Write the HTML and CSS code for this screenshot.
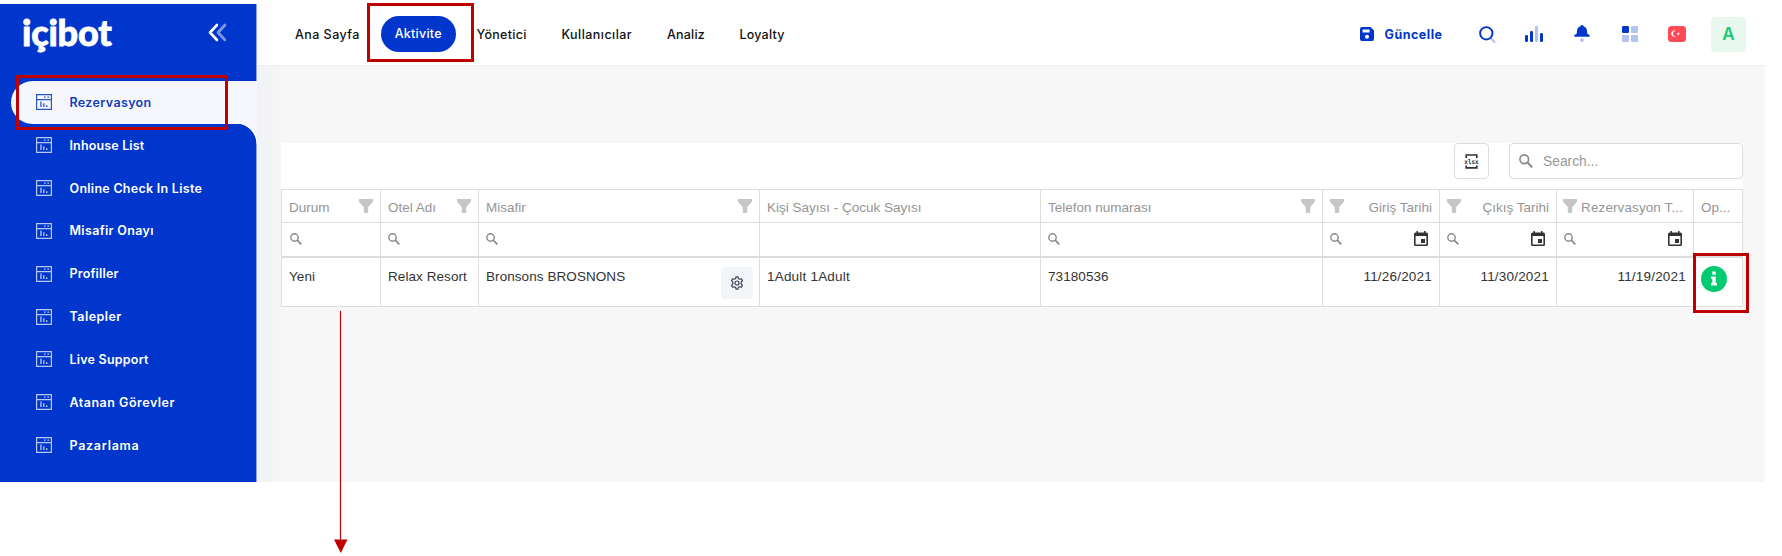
FILE: index.html
```
<!DOCTYPE html>
<html lang="tr">
<head>
<meta charset="utf-8">
<title>içibot</title>
<link rel="stylesheet" href="styles.css">
</head>
<body>
<svg class="defs" width="0" height="0">
  <symbol id="report" viewBox="0 0 16 16"><path d="M.6.6h14.8v14.8H.6zM.6 5.6h14.8" fill="none" stroke="currentColor" stroke-width="1.2"/><path d="M8 2.6h1.6v1.2H8zM11.4 2.6H13v1.2h-1.6zM4.3 7.6h1.3v5.4H4.3zM7.2 9.2h1.3V13H7.2zM10 11.3h1.4V13H10z" fill="currentColor"/></symbol>
  <symbol id="funnel" viewBox="0 0 14 14"><path d="M0 0h14v2.8L9.2 8v6H4.8V8L0 2.8z" fill="currentColor"/></symbol>
  <symbol id="lens" viewBox="0 0 12 12"><circle cx="4.500" cy="4.500" r="3.700" fill="none" stroke="currentColor" stroke-width="1.400"/><path d="M7.200 7.200l4.100 4.100" stroke="currentColor" stroke-width="1.700"/></symbol>
  <symbol id="calendar" viewBox="0 0 14 15"><path d="M2.500 0H4v1.400h6V0h1.500v1.400H12.500Q14 1.400 14 2.900v10.600Q14 15 12.500 15h-11Q0 15 0 13.500V2.900Q0 1.400 1.500 1.400h1zM1.600 5v8.400h10.800V5z" fill="#333" fill-rule="evenodd"/><path d="M7 8h4v4H7z" fill="#333"/></symbol>
</svg>
<div class="app">
  <aside class="sidebar">
    <div class="brand"><span class="logo">içibot</span>
      <svg width="19" height="19" viewBox="0 0 19 19" fill="none" stroke="#fff" stroke-width="2.600" stroke-linecap="round" stroke-linejoin="round"><path d="M9 2L2 9.500 9 17"/><path d="M17 2l-7 7.500 7 7.500" opacity=".5"/></svg>
    </div>
    <nav class="menu">
      <a class="item active"><svg class="ico"><use href="#report"/></svg><span class="w1">Rezervasyon</span></a>
      <a class="item"><svg class="ico"><use href="#report"/></svg><span class="w2">Inhouse List</span></a>
      <a class="item"><svg class="ico"><use href="#report"/></svg><span class="w3">Online Check In Liste</span></a>
      <a class="item"><svg class="ico"><use href="#report"/></svg><span class="w4">Misafir Onayı</span></a>
      <a class="item"><svg class="ico"><use href="#report"/></svg><span class="w5">Profiller</span></a>
      <a class="item"><svg class="ico"><use href="#report"/></svg><span class="w6">Talepler</span></a>
      <a class="item"><svg class="ico"><use href="#report"/></svg><span class="w7">Live Support</span></a>
      <a class="item"><svg class="ico"><use href="#report"/></svg><span class="w8">Atanan Görevler</span></a>
      <a class="item"><svg class="ico"><use href="#report"/></svg><span class="w9">Pazarlama</span></a>
    </nav>
  </aside>
  <main class="main">
    <header class="topbar">
      <nav class="tabs">
        <a class="t1">Ana Sayfa</a><a class="t2 pill">Aktivite</a><a class="t3">Yönetici</a><a class="t4">Kullanıcılar</a><a class="t5">Analiz</a><a class="t6">Loyalty</a>
      </nav>
      <div class="tools">
        <svg class="save" width="14" height="14" viewBox="0 0 14 14"><path d="M2 0h8.500L14 3.500V12q0 2-2 2H2q-2 0-2-2V2Q0 0 2 0zM2.600 2.600v3h7v-3zM7 7.800a2 2 0 100 4 2 2 0 000-4z" fill="#0036cb" fill-rule="evenodd"/></svg>
        <span class="update">Güncelle</span>
        <svg class="find" width="17" height="17" viewBox="0 0 17 17" fill="none"><path d="M11.500 12l4 4" stroke="#b4c2f0" stroke-width="2" stroke-linecap="round"/><circle cx="7.300" cy="7.300" r="6.200" stroke="#0036cb" stroke-width="1.900"/></svg>
        <svg class="bars" width="18" height="17" viewBox="0 0 18 17"><g fill="#0036cb"><rect y="9" width="3" height="7" rx="1.200"/><rect x="5" y="5" width="3" height="11" rx="1.200"/><rect x="15" y="7" width="3" height="9" rx="1.200"/></g><rect x="10" width="3" height="16" rx="1.200" fill="#b4c2f0"/></svg>
        <svg class="bell" width="16" height="18" viewBox="0 0 16 18"><path d="M8 0q1.300 0 1.500 1.200Q12.800 2.300 13 6l.3 2.700L15.500 10q.8 1.800-1 1.800h-13Q-.3 11.800.5 10l2.200-1.300L3 6q.2-3.700 3.500-4.800Q6.700 0 8 0z" fill="#0036cb"/><circle cx="8" cy="15" r="1.900" fill="#b4c2f0"/></svg>
        <svg class="grid" width="16" height="16" viewBox="0 0 16 16"><rect width="7" height="7" rx="1.300" fill="#0036cb"/><g fill="#b4c2f0"><rect x="9" width="7" height="7" rx="1.300"/><rect y="9" width="7" height="7" rx="1.300"/><rect x="9" y="9" width="7" height="7" rx="1.300"/></g></svg>
        <svg class="flag" width="18" height="16" viewBox="0 0 18 16"><rect width="18" height="16" rx="3.500" fill="#ff4b55"/><path d="M8.200 5.200a3.100 3.100 0 100 5 2.600 2.600 0 110-5zM10.200 6.300l.5 1 1.100.2-.8.700.2 1.100-1-.5-1 .5.200-1.100-.7-.7 1-.2z" fill="#fff"/></svg>
        <span class="avatar">A</span>
      </div>
    </header>
    <section class="panel">
      <div class="actions">
        <button class="xlsx"><svg width="15" height="15" viewBox="0 0 15 15"><path d="M2.200 4V1h10.600v3M2.200 11.500v2.300h10.600v-2.300" fill="none" stroke="#333" stroke-width="1.700"/><text x="0.300" y="10" textLength="14.400" lengthAdjust="spacingAndGlyphs" class="xl">xlsx</text></svg></button>
        <div class="search"><svg width="14" height="14"><use href="#lens"/></svg><span>Search...</span></div>
      </div>
      <div class="table">
        <div class="row head">
          <div>Durum<svg class="fn"><use href="#funnel"/></svg></div>
          <div>Otel Adı<svg class="fn"><use href="#funnel"/></svg></div>
          <div>Misafir<svg class="fn"><use href="#funnel"/></svg></div>
          <div>Kişi Sayısı - Çocuk Sayısı</div>
          <div>Telefon numarası<svg class="fn"><use href="#funnel"/></svg></div>
          <div><svg class="fn"><use href="#funnel"/></svg>Giriş Tarihi</div>
          <div><svg class="fn"><use href="#funnel"/></svg>Çıkış Tarihi</div>
          <div class="long"><svg class="fn"><use href="#funnel"/></svg>Rezervasyon T...</div>
          <div>Op...</div>
        </div>
        <div class="row filter">
          <div><svg class="ln"><use href="#lens"/></svg></div>
          <div><svg class="ln"><use href="#lens"/></svg></div>
          <div><svg class="ln"><use href="#lens"/></svg></div>
          <div></div>
          <div><svg class="ln"><use href="#lens"/></svg></div>
          <div><svg class="ln"><use href="#lens"/></svg><svg class="cal"><use href="#calendar"/></svg></div>
          <div><svg class="ln"><use href="#lens"/></svg><svg class="cal"><use href="#calendar"/></svg></div>
          <div><svg class="ln"><use href="#lens"/></svg><svg class="cal"><use href="#calendar"/></svg></div>
          <div></div>
        </div>
        <div class="row data">
          <div>Yeni</div><div>Relax Resort</div>
          <div>Bronsons BROSNONS<button class="gear"><svg width="14" height="14" viewBox="0 0 14 14" fill="none" stroke="#3f4254" stroke-width="1.200" stroke-linejoin="round"><path d="M5.700 2.500L6 .8h2l.3 1.700 1.400.8 1.700-.6 1.100 1.800L11.200 5.800v2.400l1.300 1.300-1.100 1.800-1.700-.6-1.400.8L8 13.200H6l-.3-1.700-1.400-.8-1.700.6-1.100-1.800 1.300-1.300V5.800L1.500 4.500l1.100-1.800 1.700.6z"/><circle cx="7" cy="7" r="2"/></svg></button></div>
          <div class="guests">1Adult 1Adult</div><div>73180536</div>
          <div class="date">11/26/2021</div><div class="date">11/30/2021</div><div class="date">11/19/2021</div>
          <div class="info"><svg width="26" height="26" viewBox="0 0 26 26"><circle cx="13" cy="13" r="13" fill="#00cb70"/><path d="M11.300 5.500h3.400v3.300h-3.400zM10 10.500h4.700v6.600H16v2.500h-6v-2.500h1.300V13H10z" fill="#fff"/></svg></div>
        </div>
      </div>
    </section>
  </main>
</div>
<div class="mark mark-menu"></div>
<div class="mark mark-tab"></div>
<div class="mark mark-info"></div>
<svg class="arrow" width="14" height="243" viewBox="0 0 14 243"><path d="M6.500 0v230" stroke="#c00000" stroke-width="1.200"/><path d="M0 228.500h13.500L6.800 242z" fill="#c00000"/></svg>
</body>
</html>
```
FILE: styles.css
```
* { box-sizing: border-box; }
body { margin: 0; width: 1782px; height: 556px; overflow: hidden; background: #fff; font-family: "Liberation Sans", Arial, sans-serif; }
.defs { position: absolute; }
.app { display: flex; width: 1765px; height: 482px; padding-top: 4px; }
.sidebar { width: 257px; background: #0036cb; border-right: 1px solid #8ea4e6; font-family: Inter, sans-serif; }
.brand { height: 77px; display: flex; justify-content: space-between; padding: 0 29px 0 22px; }
.brand svg { margin-top: 19px; }
.logo { font: 900 36px/44px Lato, sans-serif; color: #fff; letter-spacing: -.2px; margin-top: 6px; -webkit-text-stroke: .8px #fff; }
.menu { display: flex; flex-direction: column; }
.item { height: 42.85px; display: flex; align-items: center; gap: 18px; padding-left: 35.500px; color: #fff; font-size: 12.500px; font-weight: 600; white-space: nowrap; }
.item .ico { width: 16px; height: 16px; color: #b8c8f4; }
.item.active { background: #f5f7fd; color: #1140b8; margin-left: 11px; padding-left: 24.500px; border-radius: 22px 0 0 22px; margin-right: -1px; }
.item.active .ico { color: #2a55c0; }
.item.active + .item { background: radial-gradient(circle at 0 100%, #0036cb 20px, #f5f7fd 20.700px) right top / 21px 20px no-repeat; margin-right: -1px; }
.w1 { letter-spacing: .35px; }
.w2 { letter-spacing: .15px; }
.w3 { letter-spacing: .27px; }
.w4 { letter-spacing: .33px; }
.w5 { letter-spacing: .2px; }
.w6 { letter-spacing: .45px; }
.w7 { letter-spacing: .22px; }
.w8 { letter-spacing: .5px; }
.w9 { letter-spacing: .72px; }
.main { flex: 1; background: linear-gradient(90deg, #f1f2f4, #f7f7f7 28px); }
.topbar { height: 62px; background: linear-gradient(90deg, #fafafc, #fff 22px); border-bottom: 1px solid #efeff2; display: flex; justify-content: space-between; font-family: Inter, sans-serif; }
.tabs { display: flex; align-items: center; height: 60px; padding-left: 38px; font-size: 12.500px; font-weight: 500; color: #111; white-space: nowrap; }
.tabs .t1 { width: 86px; letter-spacing: .45px; }
.tabs .t2 { width: 74.500px; height: 36px; line-height: 36px; border-radius: 18px; text-align: center; background: #0036cb; color: #fff; margin-right: 21px; letter-spacing: .25px; }
.tabs .t3 { width: 85px; letter-spacing: .3px; }
.tabs .t4 { width: 105.500px; letter-spacing: .45px; }
.tabs .t5 { width: 72.500px; letter-spacing: .2px; }
.tabs .t6 { letter-spacing: .2px; }
.tools { display: flex; align-items: center; height: 60px; padding-right: 19px; }
.update { width: 94.500px; margin-left: 11px; color: #0036cb; font-size: 12.500px; font-weight: 700; letter-spacing: .5px; }
.bars { margin-left: 29px; }
.bell { margin-left: 31px; margin-top: -1px; }
.grid { margin-left: 32px; }
.flag { margin-left: 30px; }
.avatar { margin-left: 25px; width: 35px; height: 35px; border-radius: 4px; background: #e8f8ef; color: #18c973; font-weight: 600; font-size: 17px; line-height: 35px; text-align: center; margin-top: 1px; }
.panel { width: 1462px; margin: 77px 0 0 24px; background: #fff; }
.actions { height: 46px; display: flex; justify-content: flex-end; gap: 20px; }
.xlsx { width: 35px; height: 36px; padding: 0; border: 1px solid #ddd; border-radius: 4px; background: #fff; display: flex; align-items: center; justify-content: center; }
.xl { font: 700 6.500px "DejaVu Sans Mono", monospace; fill: #333; }
.search { width: 234px; height: 36px; border: 1px solid #ddd; border-radius: 4px; display: flex; align-items: center; gap: 10px; padding-left: 9px; color: #999; font-size: 13.800px; }
.search svg { color: #888; }
.table { border: 1px solid #ddd; }
.row { display: grid; grid-template-columns: 99px 98px 281px 281px 282px 117px 117px 137px 1fr; }
.row > div { border-right: 1px solid #ddd; display: flex; align-items: center; justify-content: space-between; padding: 0 7px; white-space: nowrap; }
.row > div:last-child { border-right: 0; }
.head { height: 33px; border-bottom: 1px solid #ddd; color: #959595; font-size: 13.500px; }
.head > div { padding-top: 3px; }
.head .long { padding-left: 6px; padding-right: 10px; letter-spacing: .1px; }
.fn { width: 14px; height: 14px; color: #c6c6c6; margin-top: -3px; flex: none; }
.filter { height: 35px; border-bottom: 2px solid #ddd; }
.ln { width: 12px; height: 12px; color: #888; margin-top: -2px; }
.row > div:first-child .ln { margin-left: 1px; }
.filter .cal { width: 14px; height: 15px; margin-right: 4px; margin-top: -3px; }
.data { height: 48px; color: #333; font-size: 13.500px; letter-spacing: .07px; }
.data > div { align-items: flex-start; padding-top: 11px; }
.data > .date { justify-content: flex-end; letter-spacing: .2px; }
.data > .guests { letter-spacing: .2px; }
.gear { width: 32px; height: 32px; margin: -2px -1px 0 0; padding: 0; border: 0; border-radius: 3px; background: #f3f6f9; display: flex; align-items: center; justify-content: center; }
.data .info { padding-top: 8px; }
.mark { position: absolute; border: 3px solid #c00000; }
.mark-menu { left: 16px; top: 75px; width: 212px; height: 55px; }
.mark-tab { left: 367px; top: 3px; width: 107px; height: 59px; }
.mark-info { left: 1693px; top: 253px; width: 56px; height: 60px; }
.arrow { position: absolute; left: 334px; top: 311px; }
```
